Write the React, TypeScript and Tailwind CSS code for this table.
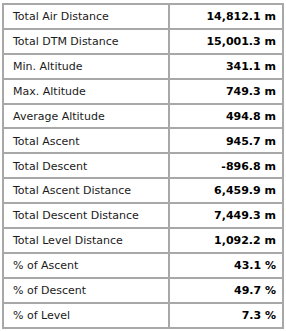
const rows: [string, string][] = [
  ["Total Air Distance", "14,812.1 m"],
  ["Total DTM Distance", "15,001.3 m"],
  ["Min. Altitude", "341.1 m"],
  ["Max. Altitude", "749.3 m"],
  ["Average Altitude", "494.8 m"],
  ["Total Ascent", "945.7 m"],
  ["Total Descent", "-896.8 m"],
  ["Total Ascent Distance", "6,459.9 m"],
  ["Total Descent Distance", "7,449.3 m"],
  ["Total Level Distance", "1,092.2 m"],
  ["% of Ascent", "43.1 %"],
  ["% of Descent", "49.7 %"],
  ["% of Level", "7.3 %"],
];

export default function App() {
  return (
    <div className="w-[286px] h-[331px] bg-white px-[2px] pt-[3px] font-['DejaVu_Sans',Verdana,sans-serif] text-[11px]">
      <table className="w-[282px] border-separate border-spacing-0 border border-[#a8a8a8]">
        <tbody>
          {rows.map(([label, value]) => (
            <tr key={label} className="h-[24.9px]">
              <td className="w-[166px] border border-[#a8a8a8] pl-[9px] pt-[2px] text-[#1a1a1a]">
                {label}
              </td>
              <td className="border border-[#a8a8a8] pr-[6px] pt-[2px] text-right font-bold text-black">
                {value}
              </td>
            </tr>
          ))}
        </tbody>
      </table>
    </div>
  );
}
